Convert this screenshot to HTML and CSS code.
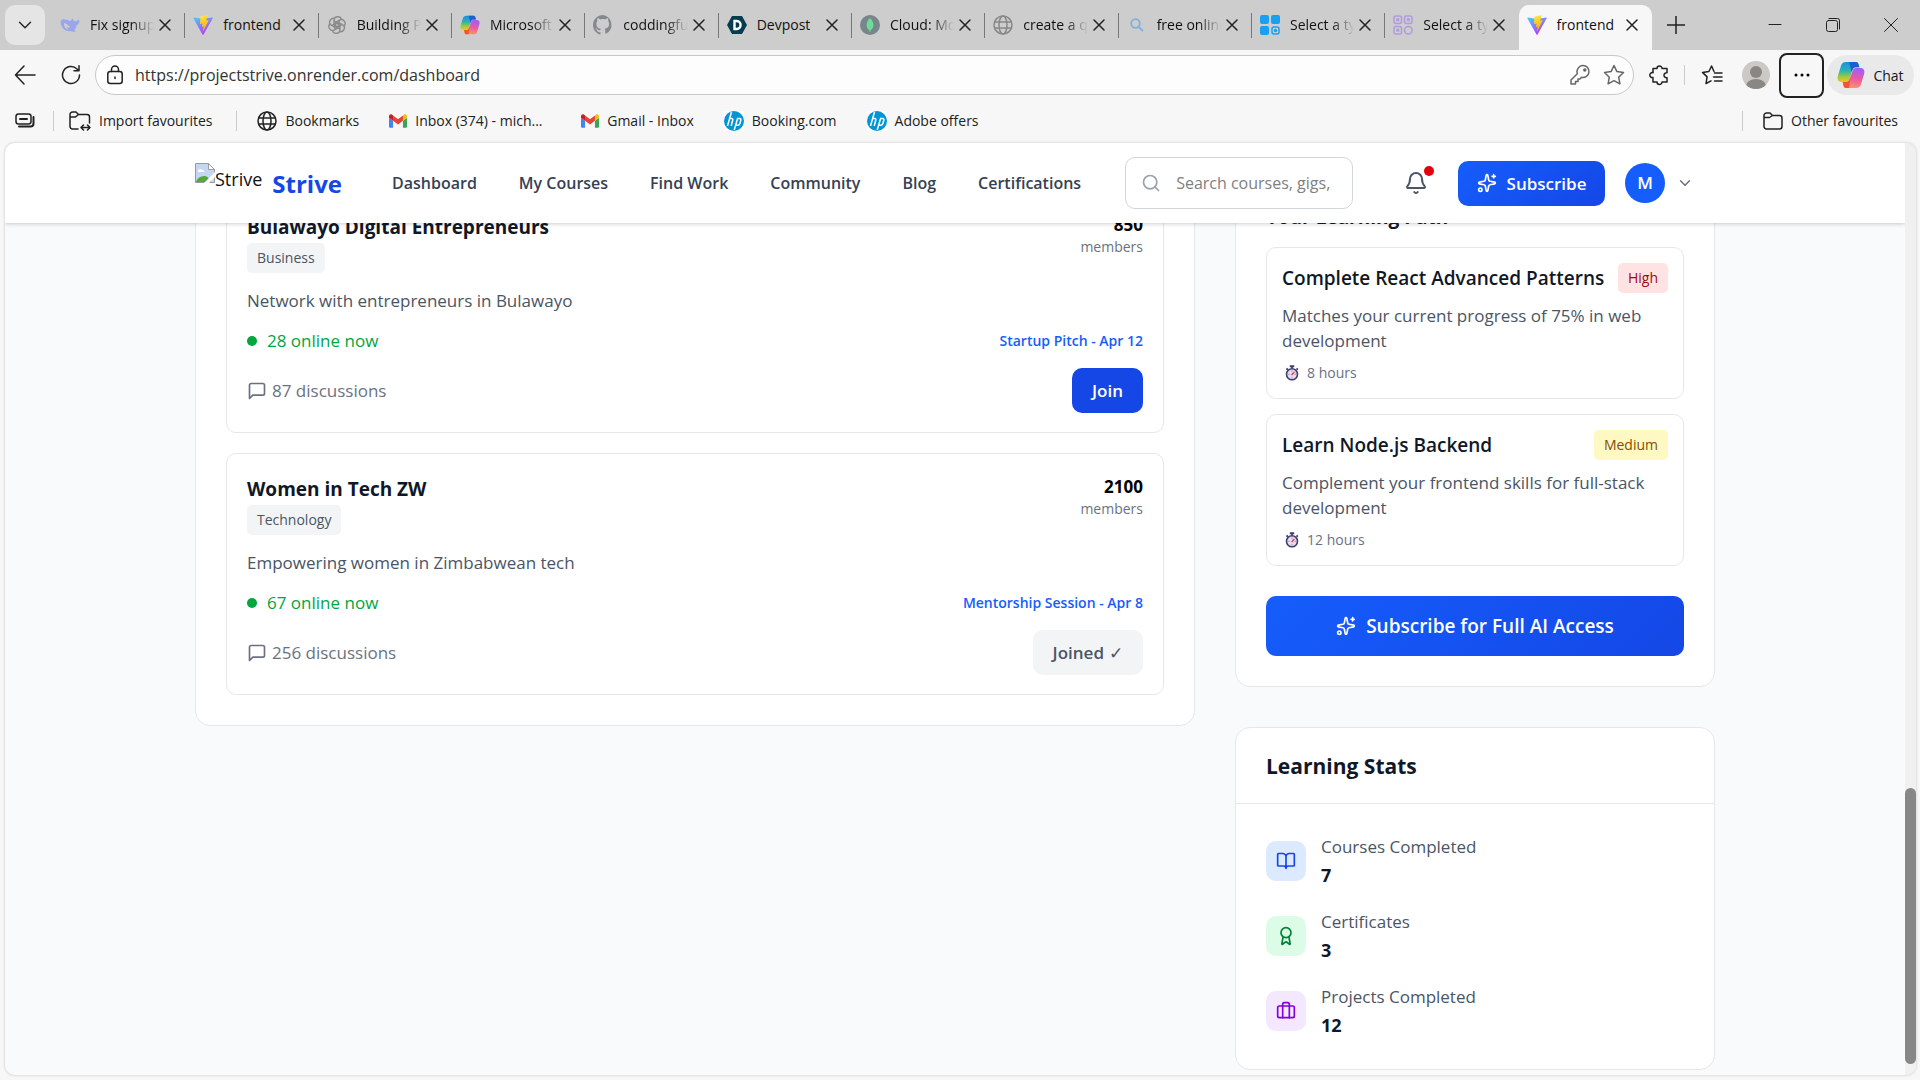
FILE: index.html
```html
<!DOCTYPE html>
<html lang="en">
<head>
<meta charset="utf-8">
<meta name="viewport" content="width=device-width, initial-scale=1">
<title>frontend</title>
<link rel="stylesheet" href="styles.css">
</head>
<body>
<svg class="sprite" aria-hidden="true">
  <defs>
    <linearGradient id="vite-a" x1="0" y1="0" x2="0.6" y2="1"><stop offset="0" stop-color="#41d1ff"/><stop offset="1" stop-color="#bd34fe"/></linearGradient>
    <linearGradient id="vite-b" x1="0.4" y1="0" x2="0.6" y2="1"><stop offset="0" stop-color="#ffea83"/><stop offset="0.1" stop-color="#ffdd35"/><stop offset="1" stop-color="#ffa800"/></linearGradient>
    <linearGradient id="cp-a" x1="0" y1="0" x2="0" y2="1"><stop offset="0" stop-color="#1b8fe8"/><stop offset="0.45" stop-color="#2bb5b0"/><stop offset="0.75" stop-color="#a3c93a"/><stop offset="1" stop-color="#f6c51b"/></linearGradient>
    <linearGradient id="cp-b" x1="0.4" y1="0" x2="0.2" y2="1"><stop offset="0" stop-color="#a55bf5"/><stop offset="0.5" stop-color="#ee5a9e"/><stop offset="1" stop-color="#ff9a6b"/></linearGradient>
  </defs>
  <symbol id="i-chevron" viewBox="0 0 24 24"><path d="m6 9 6 6 6-6"/></symbol>
  <symbol id="i-x" viewBox="0 0 12 12"><path d="M1 1l10 10M11 1L1 11"/></symbol>
  <symbol id="i-globe" viewBox="0 0 20 20"><circle cx="10" cy="10" r="9"/><ellipse cx="10" cy="10" rx="4" ry="9"/><path d="M2 7h16M2 13h16"/></symbol>
  <symbol id="i-vite" viewBox="0 0 20 20"><path fill="url(#vite-a)" d="M19.7 3.3 10.6 19.4a.6.6 0 0 1-1.1 0L.3 3.3A.6.6 0 0 1 1 2.5l9.1 1.6 8.9-1.6a.6.6 0 0 1 .7.8z"/><path fill="url(#vite-b)" d="M14.3.2 7.6 1.5a.3.3 0 0 0-.2.2L7 8.7c0 .2.1.3.3.3l1.9-.4c.2 0 .3.1.3.3L9 11.6c0 .2.1.3.3.3l1.1-.4c.2 0 .4.1.3.3l-.9 4.3c0 .3.3.4.4.2l5.5-10.7c.1-.2-.1-.4-.3-.4l-1.9.4a.3.3 0 0 1-.3-.3L14.6.5a.3.3 0 0 0-.3-.3z"/></symbol>
  <symbol id="i-copilot" viewBox="0 0 28 28"><path fill="url(#cp-a)" d="M9 1h9.5c1.6 0 2.6.9 3 2.3l.8 2.9h-3.6c-1.6 0-2.7.9-3.2 2.5l-3.1 9.6c-.6 1.8-1.6 2.7-3.3 2.7H4.5C1.2 21 0 18.3.8 15.2L3.9 5C4.7 2.3 6.2 1 9 1z"/><path fill="#1a5fd0" d="M12 1h6.5c1.6 0 2.6.9 3 2.3l.8 2.9h-3.6c-1.6 0-2.7.9-3.2 2.5L14.7 11z"/><path fill="url(#cp-b)" d="M19 27H9.5c-1.6 0-2.6-.9-3-2.3L5.7 21h3.6c1.6 0 2.7-.9 3.2-2.5l3.1-8.8c.6-1.8 1.6-2.7 3.3-2.7h4.6c3.3 0 4.5 2.7 3.7 5.8L24.1 23C23.3 25.7 21.8 27 19 27z"/><path fill="#f4552f" d="M12 27H9.5c-1.6 0-2.6-.9-3-2.3L5.7 21h3.6c1.6 0 2.7-.9 3.2-2.5l1.2-3z"/></symbol>
  <symbol id="i-gmail" viewBox="0 0 20 15"><path fill="#4285f4" d="M1.4 15H4.5V7.3L0 4v9.6C0 14.4.6 15 1.4 15z"/><path fill="#34a853" d="M15.5 15h3.1c.8 0 1.4-.6 1.4-1.4V4l-4.5 3.3z"/><path fill="#fbbc04" d="M15.5 1.4v5.9L20 4V2.2c0-1.9-2.1-2.8-3.4-1.7z"/><path fill="#ea4335" d="M4.5 7.3V1.4L10 5.5l5.5-4.1v5.9L10 11.4z"/><path fill="#c5221f" d="M0 2.2V4l4.5 3.3V1.4L3.4.5C2.1-.6 0 .3 0 2.2z"/></symbol>
  <symbol id="i-hp" viewBox="0 0 20 20"><rect width="20" height="20" fill="#fff"/><circle cx="10" cy="10" r="10" fill="#0096d6"/><path fill="none" stroke="#fff" stroke-width="1.5" d="M7.5 1 3.5 15M5.6 7.5h2c1.2 0 1.4.8 1.1 1.8L7.2 15M10.2 19l3.4-11.5h2c1.2 0 1.5.8 1.2 1.8l-1 3.4c-.3 1-.9 1.5-2 1.5h-1.9"/></symbol>
  <symbol id="i-sparkles" viewBox="0 0 24 24"><path d="M11.017 2.814a1 1 0 0 1 1.966 0l1.051 5.558a2 2 0 0 0 1.594 1.594l5.558 1.051a1 1 0 0 1 0 1.966l-5.558 1.051a2 2 0 0 0-1.594 1.594l-1.051 5.558a1 1 0 0 1-1.966 0l-1.051-5.558a2 2 0 0 0-1.594-1.594l-5.558-1.051a1 1 0 0 1 0-1.966l5.558-1.051a2 2 0 0 0 1.594-1.594zM20 2v4M22 4h-4"/><circle cx="4" cy="20" r="2"/></symbol>
  <symbol id="i-message" viewBox="0 0 24 24"><path d="M21 15a2 2 0 0 1-2 2H7l-4 4V5a2 2 0 0 1 2-2h14a2 2 0 0 1 2 2z"/></symbol>
  <symbol id="i-watch" viewBox="0 0 16 18"><path fill="#433b6b" d="M5.5 0h5v2.5H9v1.2H7V2.5H5.5zM1 4.5 2.5 3 4 4.5 2.5 6zM12.5 4.5 14 3l1.3 1.5L14 6z"/><circle cx="8" cy="10.5" r="6.3" fill="#e4dfee" stroke="#433b6b" stroke-width="1.8"/><path stroke="#8d86a8" d="M8 6v1.5M8 13.5V15M3.5 10.5H5M11 10.5h1.5"/><path stroke="#e8315b" stroke-width="1.5" d="m7.5 11.3 3.3-3.6"/></symbol>
</svg>

<div class="tabstrip">
  <button class="tab-search" aria-label="Search tabs"><svg class="line" width="22" height="22"><use href="#i-chevron"/></svg></button>
  <div class="tabs" role="tablist">
    <div class="tab" role="tab"><svg width="20" height="20" viewBox="0 0 20 20"><path fill="#98a6ec" d="M.5 7C1 4.5 3 4 5 4.6c2 .1 3.5.6 5 1.6 1-.6 1.7-1.2 2-2.7 1 .3 1.3 1.2 1.3 2 1 .9 2.2 1 3.5.5.9-.4 1.5-.8 2-1.5 1.2 2.5.2 5-2.3 5.7-.3 2-1 3.5-2.3 4.7l1.9 1.1c-2.2 1-4 .7-5.5.1C5.5 17 1.3 13 .5 7z"/><path fill="#cdcdcd" d="M4 8c2.5.4 4.5 2 6 4.3-1 .5-2 .5-3-.1 0 1.5.8 2 2 2.7C6 14.5 3.7 12 4 8z"/></svg><span class="tab-title">Fix signup page</span><button class="tab-close" aria-label="Close tab"><svg class="line x" width="12" height="12"><use href="#i-x"/></svg></button></div>
    <div class="tab" role="tab"><svg width="20" height="20"><use href="#i-vite"/></svg><span class="tab-title">frontend</span><button class="tab-close" aria-label="Close tab"><svg class="line x" width="12" height="12"><use href="#i-x"/></svg></button></div>
    <div class="tab" role="tab"><svg width="20" height="20" viewBox="0 0 20 20" fill="none" stroke="#8c8c8c" stroke-width="1.4"><path id="petal" d="M7 10.5V5.5c0-5 7-5 7.5-.5M7 5.8l4.5 2.6v4"/><use href="#petal" transform="rotate(60 10 10)"/><use href="#petal" transform="rotate(120 10 10)"/><use href="#petal" transform="rotate(180 10 10)"/><use href="#petal" transform="rotate(240 10 10)"/><use href="#petal" transform="rotate(300 10 10)"/></svg><span class="tab-title">Building Project</span><button class="tab-close" aria-label="Close tab"><svg class="line x" width="12" height="12"><use href="#i-x"/></svg></button></div>
    <div class="tab" role="tab"><svg width="20" height="20"><use href="#i-copilot"/></svg><span class="tab-title">Microsoft Copilot</span><button class="tab-close" aria-label="Close tab"><svg class="line x" width="12" height="12"><use href="#i-x"/></svg></button></div>
    <div class="tab" role="tab"><svg width="20" height="20" viewBox="0 0 16 16"><path fill="#85898e" d="M8 0C3.6 0 0 3.6 0 8c0 3.5 2.3 6.5 5.5 7.6.4.1.5-.2.5-.4v-1.5c-2 .4-2.7-.9-2.9-1.6-.1-.2-.5-.9-.8-1.1-.3-.2-.7-.5 0-.5.6 0 1.1.6 1.2.8.7 1.2 1.9.9 2.3.7.1-.5.3-.9.5-1.1-1.8-.2-3.6-.9-3.6-4 0-.9.3-1.6.8-2.1-.1-.2-.4-1 .1-2.1 0 0 .7-.2 2.2.8.6-.2 1.3-.3 2-.3s1.4.1 2 .3c1.5-1 2.2-.8 2.2-.8.4 1.1.2 1.9.1 2.1.5.6.8 1.3.8 2.1 0 3.1-1.9 3.7-3.7 4 .3.2.6.7.6 1.5v2.2c0 .2.1.5.6.4A8 8 0 0 0 8 0z"/></svg><span class="tab-title">coddingfuture</span><button class="tab-close" aria-label="Close tab"><svg class="line x" width="12" height="12"><use href="#i-x"/></svg></button></div>
    <div class="tab" role="tab"><svg width="20" height="20" viewBox="0 0 20 20"><path fill="#063c50" d="M5 1h10l5 9-5 9H5l-5-9z"/><path fill="none" stroke="#fff" stroke-width="2.4" d="M7.5 6h2.3c5 0 5 8 0 8H7.5z"/></svg><span class="tab-title">Devpost</span><button class="tab-close" aria-label="Close tab"><svg class="line x" width="12" height="12"><use href="#i-x"/></svg></button></div>
    <div class="tab" role="tab"><svg width="20" height="20" viewBox="0 0 20 20"><circle cx="10" cy="10" r="10" fill="#76868b"/><path fill="#6fdc96" d="M10 3c5 5 4 10 .4 12.5V17h-.8v-1.5C6 13 5 8 10 3z"/></svg><span class="tab-title">Cloud: MongoDB</span><button class="tab-close" aria-label="Close tab"><svg class="line x" width="12" height="12"><use href="#i-x"/></svg></button></div>
    <div class="tab" role="tab"><svg class="line globe-dim" width="20" height="20"><use href="#i-globe"/></svg><span class="tab-title">create a qr code</span><button class="tab-close" aria-label="Close tab"><svg class="line x" width="12" height="12"><use href="#i-x"/></svg></button></div>
    <div class="tab" role="tab"><svg width="20" height="20" viewBox="0 0 20 20" fill="none" stroke="#7fb0dd" stroke-width="1.8"><circle cx="8.5" cy="8.5" r="4.3"/><path d="m11.8 11.8 4.2 4.2"/></svg><span class="tab-title">free online tools</span><button class="tab-close" aria-label="Close tab"><svg class="line x" width="12" height="12"><use href="#i-x"/></svg></button></div>
    <div class="tab" role="tab"><svg width="20" height="20" viewBox="0 0 20 20" fill="#18a0f2"><rect width="9" height="9" rx="2"/><rect x="11" width="9" height="9" rx="2"/><rect y="11" width="9" height="9" rx="2"/><rect x="12" y="12" width="7" height="7" rx="2" fill="none" stroke="#18a0f2" stroke-width="1.5"/><circle cx="15.5" cy="15.5" r="1.7"/></svg><span class="tab-title">Select a type</span><button class="tab-close" aria-label="Close tab"><svg class="line x" width="12" height="12"><use href="#i-x"/></svg></button></div>
    <div class="tab" role="tab"><svg width="20" height="20" viewBox="0 0 20 20" fill="none" stroke="#b09be2" stroke-width="1.5"><rect x="1" y="1" width="7.5" height="7.5" rx="2"/><rect x="11.5" y="1" width="7.5" height="7.5" rx="2"/><rect x="1" y="11.5" width="7.5" height="7.5" rx="2"/><circle cx="15.3" cy="15.3" r="3.8"/><path stroke-width="3" d="M3.3 4.8h3M13.8 4.8h3M3.3 15.3h3"/></svg><span class="tab-title">Select a type</span><button class="tab-close" aria-label="Close tab"><svg class="line x" width="12" height="12"><use href="#i-x"/></svg></button></div>
    <div class="tab active" role="tab" aria-selected="true"><svg width="20" height="20"><use href="#i-vite"/></svg><span class="tab-title">frontend</span><button class="tab-close" aria-label="Close tab"><svg class="line x" width="12" height="12"><use href="#i-x"/></svg></button></div>
  </div>
  <button class="new-tab" aria-label="New tab"><svg class="line" width="18" height="18" viewBox="0 0 18 18"><path d="M9 0v18M0 9h18"/></svg></button>
  <div class="window-controls">
    <button aria-label="Minimise"><svg class="line thin" width="14" height="14" viewBox="0 0 14 14"><path d="M1 6.5h12"/></svg></button>
    <button aria-label="Restore"><svg class="line thin" width="14" height="14" viewBox="0 0 14 14"><rect x="0.5" y="2.5" width="11" height="11" rx="2"/><path d="M3 .5h8.5a2 2 0 0 1 2 2V11"/></svg></button>
    <button aria-label="Close"><svg class="line thin" width="14" height="14" viewBox="0 0 14 14"><path d="m.5.5 13 13M13.5.5l-13 13"/></svg></button>
  </div>
</div>

<div class="toolbar">
  <button class="tool back" aria-label="Back"><svg class="line" width="22" height="20" viewBox="0 0 22 20"><path d="M21 10H1.5M10 1 1.5 10l8.5 9"/></svg></button>
  <button class="tool reload" aria-label="Refresh"><svg class="line" width="20" height="20" viewBox="0 0 20 20"><path d="M18.5 10A8.5 8.5 0 1 1 16 4l1.5 1.5M18 .8v5h-5"/></svg></button>
  <div class="address">
    <svg class="line" width="16" height="20" viewBox="0 0 16 20"><rect x="0.8" y="6.5" width="14.4" height="12" rx="2.5"/><path d="M4.5 6.5V4.5a3.5 3.5 0 0 1 7 0v2M8 12v1.5"/></svg>
    <input type="text" aria-label="Address" value="https://projectstrive.onrender.com/dashboard">
    <button aria-label="Passwords"><svg class="line soft" width="22" height="22" viewBox="0 0 22 22"><path d="M14 1.5a6 6 0 1 1-1.5 11.8L11 15H9v2.5H6.5V20H2v-4l6.3-6.3A6.2 6.2 0 0 1 14 1.5z"/><circle cx="15.8" cy="6" r="1" fill="#555"/></svg></button>
    <button aria-label="Add to favourites"><svg class="line soft" width="22" height="22" viewBox="0 0 22 22"><path d="m11 1.5 2.9 6.1 6.6.9-4.8 4.7 1.2 6.7L11 16.7l-5.9 3.2 1.2-6.7L1.5 8.5l6.6-.9z"/></svg></button>
  </div>
  <button class="tool ext" aria-label="Extensions"><svg class="line" width="22" height="22" viewBox="0 0 22 22"><path d="M4 4.5h4a2.5 2.5 0 1 1 5 0h5v4.3a2.5 2.5 0 1 0 0 4.9V18h-5a2.5 2.5 0 0 1-5 0H4v-4.5a2.5 2.5 0 1 1 0-4.8z"/></svg></button>
  <span class="rule"></span>
  <button class="tool" aria-label="Favourites"><svg class="line" width="22" height="22" viewBox="0 0 22 22"><path d="M13 7.5 10.6 2 7.9 7.5l-6.4.9 4.6 4.5L5 19.5l5-2.7M13.5 9H21M12.5 13H21M13.5 17H21"/></svg></button>
  <button class="tool profile" aria-label="Profile"><svg width="28" height="28" viewBox="0 0 28 28"><clipPath id="pc"><circle cx="14" cy="14" r="14"/></clipPath><g clip-path="url(#pc)"><rect width="28" height="28" fill="#ccc9c5"/><circle cx="14" cy="11" r="6" fill="#8a8683"/><ellipse cx="14" cy="25" rx="10" ry="7" fill="#8a8683"/></g></svg></button>
  <button class="more" aria-label="Settings and more"><svg width="16" height="4" viewBox="0 0 16 4"><circle cx="2" cy="2" r="1.5"/><circle cx="8" cy="2" r="1.5"/><circle cx="14" cy="2" r="1.5"/></svg></button>
  <button class="chat"><svg width="28" height="28"><use href="#i-copilot"/></svg>Chat</button>
</div>

<nav class="bookmarks" aria-label="Favourites bar">
  <a href="#" class="workspace" aria-label="Workspaces"><svg class="line" width="20" height="18" viewBox="0 0 20 18"><rect x="1" y="2" width="15" height="10" rx="2.5"/><path d="M5 7h7M4 14.5h11.5a3 3 0 0 0 3-3V5" stroke-width="2"/></svg></a>
  <span class="rule"></span>
  <a href="#" class="import"><svg class="line" width="22" height="20" viewBox="0 0 22 20"><path d="M9 18H3.5A2.5 2.5 0 0 1 1 15.5v-12A2.5 2.5 0 0 1 3.5 1H7l2.5 2.5H18A2.5 2.5 0 0 1 20.5 6v6M1 6h5.5l3-2.5M12 16.5h9M14.5 14 12 16.5l2.5 2.5M18.5 14l2.5 2.5-2.5 2.5"/></svg>Import favourites</a>
  <span class="rule rule-wide"></span>
  <a href="#"><svg class="line" width="20" height="20"><use href="#i-globe"/></svg>Bookmarks</a>
  <a href="#" class="long"><svg width="18" height="14"><use href="#i-gmail"/></svg>Inbox (374) - mich...</a>
  <a href="#"><svg width="18" height="14"><use href="#i-gmail"/></svg>Gmail - Inbox</a>
  <a href="#"><svg width="20" height="20"><use href="#i-hp"/></svg>Booking.com</a>
  <a href="#"><svg width="20" height="20"><use href="#i-hp"/></svg>Adobe offers</a>
  <span class="rule push"></span>
  <a href="#" class="other"><svg class="line" width="20" height="18" viewBox="0 0 20 18"><path d="M1 14.5v-11A2.5 2.5 0 0 1 3.5 1H7l2.5 2.5h7A2.5 2.5 0 0 1 19 6v8.5a2.5 2.5 0 0 1-2.5 2.5h-13A2.5 2.5 0 0 1 1 14.5zM1 5.5h5.5l3-2"/></svg>Other favourites</a>
</nav>

<div class="viewport">
  <div class="page">
    <header class="site-header">
      <div class="container header-row">
        <a href="#" class="brand">
          <span class="brand-img"><svg width="20" height="20" viewBox="0 0 20 20"><path fill="#c6d6f2" stroke="#9a9a9a" d="M.5.5h13l6 6v13H.5z"/><path fill="#fff" d="M3 8c0-2 3-3 4-1 2-.5 3 1 2 2H3z"/><path fill="#57a639" d="M1 19c1-4 5-6 9-6 2 0 4 2 6 6z"/><path fill="#fff" d="m20 9-11 11h5l6-6z"/><path fill="#fff" stroke="#9a9a9a" d="M13.5.5v6h6z"/></svg>Strive</span>
          <span class="brand-name">Strive</span>
        </a>
        <nav class="site-nav" aria-label="Main">
          <a href="#">Dashboard</a><a href="#">My Courses</a><a href="#">Find Work</a><a href="#">Community</a><a href="#">Blog</a><a href="#">Certifications</a>
        </nav>
        <label class="search">
          <svg class="stroke" width="20" height="20" viewBox="0 0 24 24"><circle cx="11" cy="11" r="8"/><path d="m21 21-4.3-4.3"/></svg>
          <input type="text" aria-label="Search" placeholder="Search courses, gigs, people">
        </label>
        <button class="bell" aria-label="Notifications"><svg class="stroke" width="24" height="24" viewBox="0 0 24 24"><path d="M10.268 21a2 2 0 0 0 3.464 0M3.262 15.326A1 1 0 0 0 4 17h16a1 1 0 0 0 .74-1.673C19.41 13.956 18 12.499 18 8A6 6 0 0 0 6 8c0 4.499-1.411 5.956-2.738 7.326"/></svg><span class="bell-dot"></span></button>
        <button class="subscribe"><svg class="stroke" width="20" height="20"><use href="#i-sparkles"/></svg>Subscribe</button>
        <button class="account" aria-label="Account menu"><span class="avatar">M</span><svg class="stroke" width="18" height="18"><use href="#i-chevron"/></svg></button>
      </div>
    </header>
    <main class="container content">
      <section class="panel communities">
        <article class="community">
          <div class="row top">
            <div><h3>Bulawayo Digital Entrepreneurs</h3><span class="tag">Business</span></div>
            <div class="members"><strong>850</strong><span>members</span></div>
          </div>
          <p>Network with entrepreneurs in Bulawayo</p>
          <div class="row"><span class="online"><i class="dot"></i>28 online now</span><a href="#" class="event">Startup Pitch - Apr 12</a></div>
          <div class="row"><span class="talk"><svg class="stroke" width="20" height="20"><use href="#i-message"/></svg>87 discussions</span><button class="btn join">Join</button></div>
        </article>
        <article class="community">
          <div class="row top">
            <div><h3>Women in Tech ZW</h3><span class="tag">Technology</span></div>
            <div class="members"><strong>2100</strong><span>members</span></div>
          </div>
          <p>Empowering women in Zimbabwean tech</p>
          <div class="row"><span class="online"><i class="dot"></i>67 online now</span><a href="#" class="event">Mentorship Session - Apr 8</a></div>
          <div class="row"><span class="talk"><svg class="stroke" width="20" height="20"><use href="#i-message"/></svg>256 discussions</span><button class="btn joined">Joined <span class="check">✓</span></button></div>
        </article>
      </section>
      <aside class="side">
        <section class="panel path">
          <h3>Your Learning Path</h3>
          <article class="step">
            <div class="row"><h4>Complete React Advanced Patterns</h4><span class="tag high">High</span></div>
            <p>Matches your current progress of 75% in web development</p>
            <div class="hours"><svg width="14" height="16"><use href="#i-watch"/></svg>8 hours</div>
          </article>
          <article class="step">
            <div class="row"><h4>Learn Node.js Backend</h4><span class="tag medium">Medium</span></div>
            <p>Complement your frontend skills for full-stack development</p>
            <div class="hours"><svg width="14" height="16"><use href="#i-watch"/></svg>12 hours</div>
          </article>
          <button class="cta"><svg class="stroke" width="20" height="20"><use href="#i-sparkles"/></svg>Subscribe for Full AI Access</button>
        </section>
        <section class="panel stats">
          <h2>Learning Stats</h2>
          <dl>
            <div class="stat"><span class="badge blue"><svg class="stroke" width="20" height="20" viewBox="0 0 24 24"><path d="M12 7v14M3 18a1 1 0 0 1-1-1V4a1 1 0 0 1 1-1h5a4 4 0 0 1 4 4 4 4 0 0 1 4-4h5a1 1 0 0 1 1 1v13a1 1 0 0 1-1 1h-6a3 3 0 0 0-3 3 3 3 0 0 0-3-3z"/></svg></span><dt>Courses Completed</dt><dd>7</dd></div>
            <div class="stat"><span class="badge green"><svg class="stroke" width="20" height="20" viewBox="0 0 24 24"><path d="m15.477 12.89 1.515 8.526a.5.5 0 0 1-.81.47l-3.58-2.687a1 1 0 0 0-1.197 0l-3.586 2.686a.5.5 0 0 1-.81-.469l1.514-8.526"/><circle cx="12" cy="8" r="6"/></svg></span><dt>Certificates</dt><dd>3</dd></div>
            <div class="stat"><span class="badge purple"><svg class="stroke" width="20" height="20" viewBox="0 0 24 24"><path d="M16 20V4a2 2 0 0 0-2-2h-4a2 2 0 0 0-2 2v16"/><rect x="2" y="6" width="20" height="14" rx="2"/></svg></span><dt>Projects Completed</dt><dd>12</dd></div>
          </dl>
        </section>
      </aside>
    </main>
  </div>
  <div class="scrollbar"><div class="thumb"></div></div>
</div>
</body>
</html>
```
FILE: styles.css
```css
* { box-sizing: border-box; }
html, body { height: 100%; }
body {
  margin: 0;
  display: flex;
  flex-direction: column;
  overflow: hidden;
  background: #f7f7f7;
  color: #101828;
  font: 17px/25px "Open Sans", "Noto Sans", sans-serif;
}
h2, h3, h4, p, dl, dd { margin: 0; }
button { font: inherit; color: inherit; border: 0; background: none; padding: 0; display: flex; align-items: center; justify-content: center; }
input { font: inherit; color: inherit; border: 0; background: none; padding: 0; outline: 0; min-width: 0; }
a { color: inherit; text-decoration: none; }
svg { flex: none; display: block; }
.sprite { position: absolute; width: 0; height: 0; }
.line { fill: none; stroke: #222; stroke-width: 1.5; stroke-linecap: round; stroke-linejoin: round; }
.line.thin { stroke-width: 1; }
.line.soft { stroke: #666; }
.line.globe-dim { stroke: #888; }
.stroke { fill: none; stroke: currentColor; stroke-width: 2; stroke-linecap: round; stroke-linejoin: round; }
.rule { width: 1px; height: 20px; background: #ccc; }

/* Tab strip */
.tabstrip { display: flex; height: 50px; background: #cdcdcd; color: #111; font-size: 14px; line-height: 20px; }
.tab-search { flex: none; width: 40px; height: 40px; margin: 5px 7px 0 5px; border-radius: 10px; background: #e5e5e5; }
.tabs { display: flex; flex: 0 1 1600px; min-width: 0; }
.tab { flex: 1 1 0; min-width: 0; display: flex; align-items: center; gap: 10px; padding: 0 14px 0 8px; height: 50px; background: linear-gradient(#777, #777) right center / 1px 25px no-repeat; }
.tab-title { flex: 1; overflow: hidden; white-space: nowrap; margin-right: -5px; -webkit-mask-image: linear-gradient(to right, #000 65%, transparent); mask-image: linear-gradient(to right, #000 65%, transparent); }
.tab:nth-child(2) .tab-title, .tab:nth-child(6) .tab-title, .tab.active .tab-title { -webkit-mask-image: none; mask-image: none; }
.tab:nth-child(11) { background: none; }
.tab.active { height: 45px; margin-top: 5px; padding-bottom: 5px; border-radius: 10px 10px 0 0; background: #f7f7f7; }
.new-tab { width: 48px; }
.window-controls { display: flex; margin-left: auto; }
.window-controls button { width: 58px; }

/* Toolbar */
.toolbar { display: flex; align-items: center; height: 50px; padding-right: 6px; }
.tool { flex: none; width: 44px; height: 40px; }
.back { width: 50px; }
.reload { width: 41px; }
.address { flex: 1; display: flex; align-items: center; gap: 12px; height: 40px; margin: 0 4px; padding: 0 8px 0 11px; border: 1px solid #c8c8c8; border-radius: 20px; background: #fdfdfd; color: #333; font-size: 16px; }
.address input { flex: 1; }
.toolbar .rule { margin: 0 5px 0 2px; }
.more { flex: none; width: 45px; height: 45px; margin: 0 3px 0 1px; border: 2px solid #222; border-radius: 8px; }
.chat { flex: none; gap: 8px; width: 87px; height: 40px; border-radius: 20px; background: #e9e9e9; font-size: 14px; }

/* Favourites bar */
.bookmarks { display: flex; align-items: center; height: 42px; padding: 0 22px 0 15px; font-size: 14px; line-height: 20px; color: #222; }
.bookmarks a { display: flex; align-items: center; gap: 8px; margin-right: 30px; white-space: nowrap; }
.bookmarks .long { min-width: 162px; }
.bookmarks .workspace { margin-right: 18px; }
.bookmarks .import { margin-right: 24px; }
.bookmarks .rule { margin-right: 15px; }
.bookmarks .rule-wide { margin-right: 20px; }
.bookmarks .push { margin: 0 20px 0 auto; }
.bookmarks .other { margin-right: 0; }

/* Web page */
.viewport { flex: 1; min-height: 0; display: flex; margin: 1px 4px 5px 5px; border-radius: 10px; overflow: hidden; background: #f9fafb; box-shadow: 0 0 2px 1px #ddd; }
.page { flex: 1; min-width: 0; overflow: hidden; }
.scrollbar { flex: none; width: 11px; display: flex; flex-direction: column; justify-content: flex-end; padding-bottom: 11px; background: #f0f0f0; }
.thumb { height: 30%; border-radius: 6px; background: #878787; }
.container { max-width: 1600px; margin: 0 auto; padding: 0 40px; }
.site-header { position: relative; z-index: 1; background: #fff; box-shadow: 0 1px 4px rgba(0, 0, 0, 0.2); }
.header-row { display: flex; align-items: center; height: 80px; }
.brand { display: flex; align-items: center; gap: 10px; }
.brand-img { display: flex; height: 40px; color: #111; font-size: 18px; line-height: 32px; }
.brand-name { color: #1447e6; font-size: 24px; font-weight: 700; }
.site-nav { display: flex; gap: 42px; margin: 0 44px 0 50px; color: #364153; font-size: 16px; font-weight: 600; white-space: nowrap; }
.search { flex: 0 1 228px; min-width: 0; display: flex; align-items: center; gap: 15px; height: 52px; padding: 0 20px 0 15px; border: 1px solid #d1d5dc; border-radius: 10px; color: #99a1af; font-size: 16px; }
.search input { flex: 1; }
.search input::placeholder { color: #808080; opacity: 1; }
.bell { position: relative; flex: none; width: 40px; height: 40px; margin: 0 22px 0 auto; color: #4a5565; }
.bell-dot { position: absolute; top: 3px; right: 2px; width: 10px; height: 10px; border-radius: 50%; background: #e7000b; }
.subscribe, .cta { gap: 10px; border-radius: 10px; background: linear-gradient(135deg, #155dfc, #1447e6); color: #fff; font-weight: 600; }
.subscribe { flex: none; width: 147px; height: 45px; margin-right: 20px; }
.account { gap: 11px; margin-right: 21px; color: #6a7282; }
.avatar { width: 40px; height: 40px; border-radius: 50%; background: #155dfc; color: #fff; font-weight: 600; line-height: 40px; text-align: center; }

.content { display: grid; grid-template-columns: minmax(0, 1000fr) minmax(0, 480fr); align-items: start; gap: 40px; margin-top: -50px; }
.panel { border: 1px solid #e5e7eb; border-radius: 15px; background: #fff; }
.communities { display: grid; gap: 20px; padding: 17px 30px 30px; }
.community { display: grid; gap: 15px; padding: 20px 20px 19px; border: 1px solid #e5e7eb; border-radius: 10px; color: #4a5565; }
.row { display: flex; align-items: center; justify-content: space-between; }
.row.top { align-items: flex-start; }
h3, h4 { color: #101828; font-size: 19px; line-height: 30px; }
h3 { font-weight: 700; }
h4 { font-weight: 600; white-space: nowrap; }
.tag { display: block; width: max-content; padding: 5px 10px; border-radius: 5px; background: #f3f4f6; font-size: 14px; line-height: 20px; }
.top .tag { margin-top: 1px; }
.members { display: grid; text-align: right; color: #6a7282; }
.members strong { color: #000; }
.members span { font-size: 14px; line-height: 20px; }
.online { display: flex; align-items: center; gap: 10px; color: #00a63e; }
.dot { width: 10px; height: 10px; border-radius: 50%; background: #00a63e; }
.event { color: #155dfc; font-size: 14px; font-weight: 600; }
.talk { display: flex; align-items: center; gap: 5px; color: #6a7282; }
.btn { gap: 5px; height: 45px; padding: 0 20px; border-radius: 10px; font-weight: 600; }
.join { background: #1447e6; color: #fff; }
.joined { background: #f3f4f6; color: #4a5565; }
.check { font-weight: 400; }

.side { display: grid; gap: 40px; }
.path { display: grid; gap: 15px; padding: 28px 30px 30px; }
.step { display: grid; gap: 10px; padding: 15px; border: 1px solid #e5e7eb; border-radius: 10px; color: #4a5565; }
.high { background: #ffe2e2; color: #9f0712; }
.medium { background: #fef9c2; color: #894b00; }
.hours { display: flex; align-items: center; gap: 8px; padding-left: 3px; color: #6a7282; font-size: 14px; line-height: 20px; }
.cta { height: 60px; margin-top: 15px; font-size: 19px; }
.stats h2 { padding: 23px 30px 22px; border-bottom: 1px solid #e5e7eb; font-size: 21px; line-height: 30px; }
.stats dl { display: grid; gap: 19px; padding: 29px 30px 30px; }
.stat { display: grid; grid-template-columns: 40px 1fr; column-gap: 15px; align-items: center; line-height: 28px; color: #4a5565; }
.badge { grid-row: 1 / 3; display: flex; align-items: center; justify-content: center; height: 40px; border-radius: 10px; }
.blue { background: #dbeafe; color: #1447e6; }
.green { background: #dcfce7; color: #008236; }
.purple { background: #f3e8ff; color: #8200db; }
.stat dd { color: #101828; font-size: 18px; font-weight: 700; }
```
